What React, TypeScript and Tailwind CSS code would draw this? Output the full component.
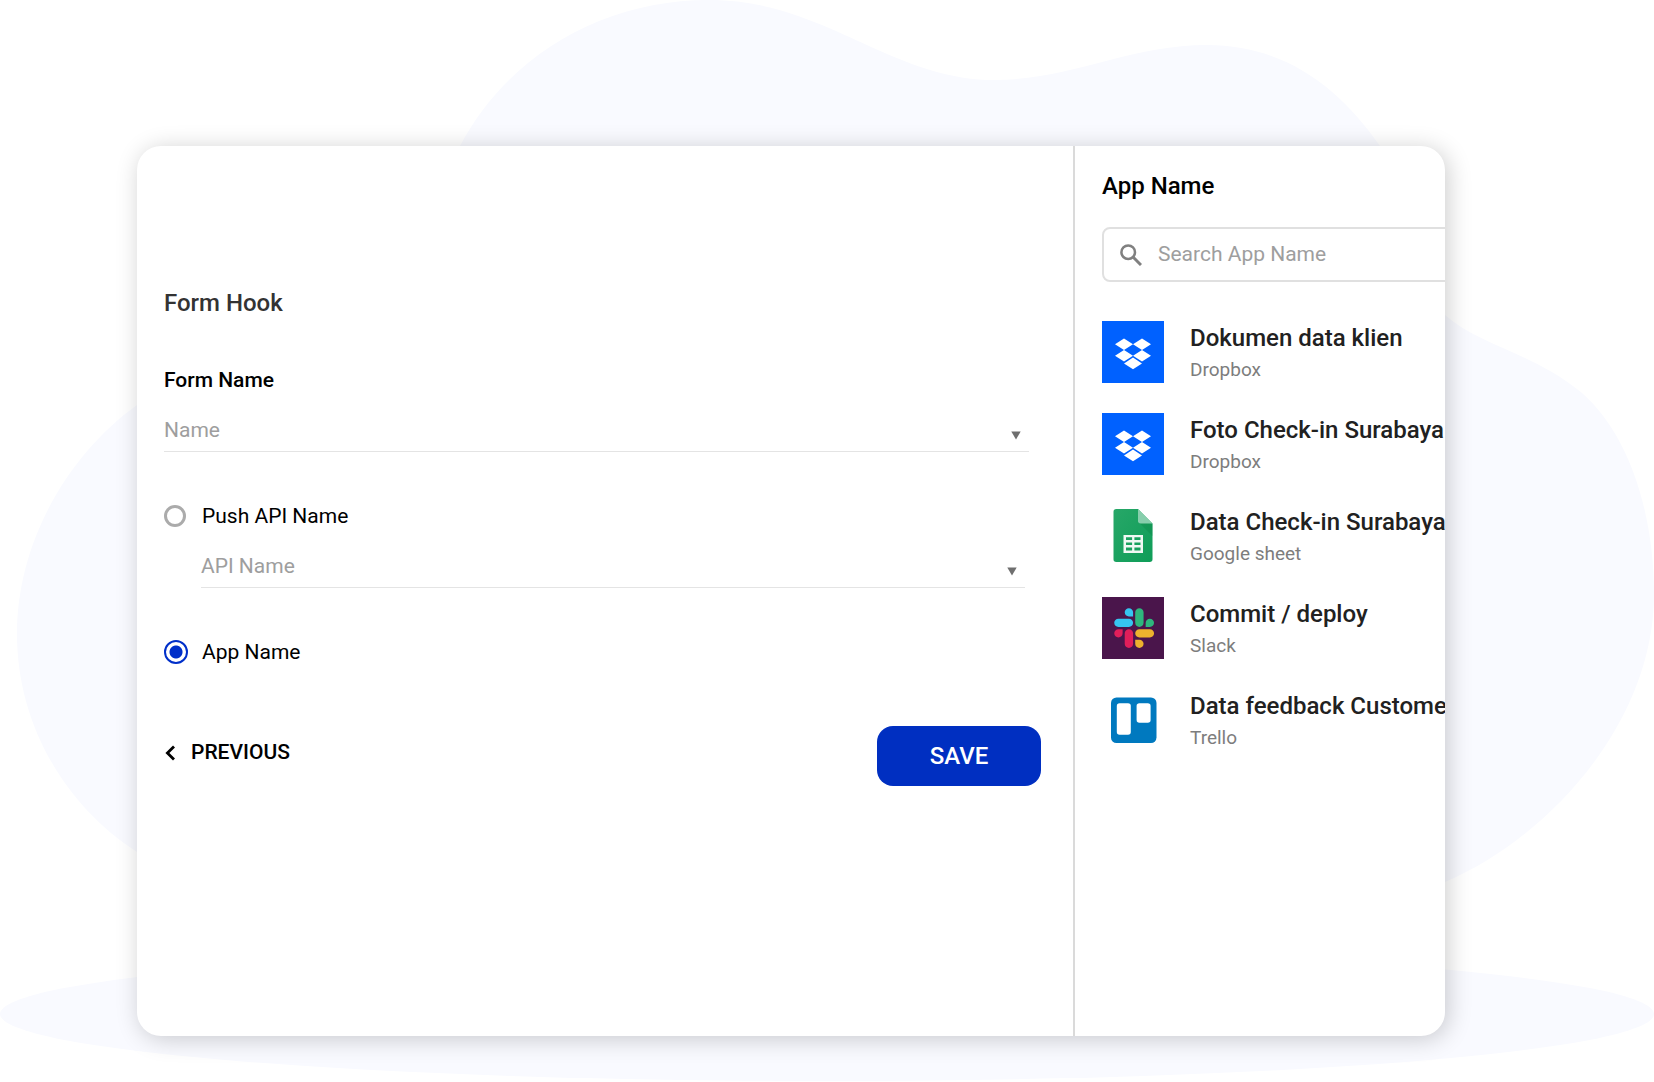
import type { ReactNode } from "react";
import { useState } from "react";

type AppKind = "Dropbox" | "Google sheet" | "Slack" | "Trello";

interface AppEntry {
  title: string;
  kind: AppKind;
}

const APPS: AppEntry[] = [
  { title: "Dokumen data klien", kind: "Dropbox" },
  { title: "Foto Check-in Surabaya", kind: "Dropbox" },
  { title: "Data Check-in Surabaya", kind: "Google sheet" },
  { title: "Commit / deploy", kind: "Slack" },
  { title: "Data feedback Customer", kind: "Trello" },
];

function DropboxLogo() {
  return (
    <svg viewBox="0 0 62 62" className="size-full bg-[#0061ff]" aria-hidden="true">
      <path
        fill="#fff"
        d="M22 17.6l9 5.7-9 5.7-9-5.7zM40 17.6l9 5.7-9 5.7-9-5.7zM22 29l9 5.7-9 5.7-9-5.7zM40 29l9 5.7-9 5.7-9-5.7zM31 36.6l9 5.8-9 5.8-9-5.8z"
      />
    </svg>
  );
}

function SheetLogo() {
  return (
    <svg viewBox="0 0 62 62" className="size-full" aria-hidden="true">
      <defs>
        <linearGradient id="sheet" x1="0" y1="0" x2="1" y2="1">
          <stop offset="0" stopColor="#27a768" />
          <stop offset="1" stopColor="#0f9d58" />
        </linearGradient>
      </defs>
      <path
        fill="url(#sheet)"
        d="M14.2 4H36l14.5 14.5v35.8a2.7 2.7 0 0 1-2.7 2.7H14.2a2.7 2.7 0 0 1-2.7-2.7V6.7A2.7 2.7 0 0 1 14.2 4z"
      />
      <path fill="#0b8043" fillOpacity="0.3" d="M37 17.5l13.5 13.4V18.5z" />
      <path fill="#87ceac" d="M36 4v11.8a2.7 2.7 0 0 0 2.7 2.7h11.8z" />
      <path
        fill="#f1f8f4"
        fillRule="evenodd"
        d="M21.5 30H41v18H21.5zM24 32.3v2.6h6.1v-2.6zM32.4 32.3v2.6h6.1v-2.6zM24 37.4V40h6.1v-2.6zM32.4 37.4V40h6.1v-2.6zM24 42.5v2.9h6.1v-2.9zM32.4 42.5v2.9h6.1v-2.9z"
      />
    </svg>
  );
}

function SlackLogo() {
  return (
    <svg viewBox="0 0 62 62" className="size-full bg-[#4a154b]" aria-hidden="true">
      <g transform="translate(12 11) scale(0.317)">
        <path
          fill="#e01e5a"
          d="M27.2 80c0 7.3-5.9 13.2-13.2 13.2C6.7 93.2.8 87.3.8 80c0-7.3 5.9-13.2 13.2-13.2h13.2V80zm6.6 0c0-7.3 5.9-13.2 13.2-13.2 7.3 0 13.2 5.9 13.2 13.2v33c0 7.3-5.9 13.2-13.2 13.2-7.3 0-13.2-5.9-13.2-13.2V80z"
        />
        <path
          fill="#36c5f0"
          d="M47 27c-7.3 0-13.2-5.9-13.2-13.2C33.8 6.5 39.7.6 47 .6c7.3 0 13.2 5.9 13.2 13.2V27H47zm0 6.7c7.3 0 13.2 5.9 13.2 13.2 0 7.3-5.9 13.2-13.2 13.2H13.9C6.6 60.1.7 54.2.7 46.9c0-7.3 5.9-13.2 13.2-13.2H47z"
        />
        <path
          fill="#2eb67d"
          d="M99.9 46.9c0-7.3 5.9-13.2 13.2-13.2 7.3 0 13.2 5.9 13.2 13.2 0 7.3-5.9 13.2-13.2 13.2H99.9V46.9zm-6.6 0c0 7.3-5.9 13.2-13.2 13.2-7.3 0-13.2-5.9-13.2-13.2V13.8C66.9 6.5 72.8.6 80.1.6c7.3 0 13.2 5.9 13.2 13.2v33.1z"
        />
        <path
          fill="#ecb22e"
          d="M80.1 99.8c7.3 0 13.2 5.9 13.2 13.2 0 7.3-5.9 13.2-13.2 13.2-7.3 0-13.2-5.9-13.2-13.2V99.8h13.2zm0-6.6c-7.3 0-13.2-5.9-13.2-13.2 0-7.3 5.9-13.2 13.2-13.2h33.1c7.3 0 13.2 5.9 13.2 13.2 0 7.3-5.9 13.2-13.2 13.2H80.1z"
        />
      </g>
    </svg>
  );
}

function TrelloLogo() {
  return (
    <svg viewBox="0 0 62 62" className="size-full" aria-hidden="true">
      <rect x="9" y="8.5" width="45.5" height="45.5" rx="5.5" fill="#0079bf" />
      <rect x="14.8" y="14.3" width="14" height="31.5" rx="2.8" fill="#fff" />
      <rect x="34.6" y="14.3" width="14" height="19.5" rx="2.8" fill="#fff" />
    </svg>
  );
}

function logoFor(kind: AppKind): ReactNode {
  switch (kind) {
    case "Dropbox":
      return <DropboxLogo />;
    case "Google sheet":
      return <SheetLogo />;
    case "Slack":
      return <SlackLogo />;
    case "Trello":
      return <TrelloLogo />;
  }
}

function Backdrop() {
  return (
    <svg
      viewBox="0 0 1654 1082"
      preserveAspectRatio="none"
      className="absolute inset-0 -z-10 size-full"
      aria-hidden="true"
    >
      <g fill="#f9faff">
        <path d="M460 146C510 52 606 0 709 0C825 0 890 80 995 80C1070 80 1130 45 1207 45C1285 45 1340 88 1380 146L1400 240C1425 290 1435 306 1445 315C1480 346 1532 352 1582 393C1630 435 1654 515 1654 594C1654 725 1545 840 1445 882L137 852C64 805 17 723 17 634C17 540 70 453 137 405L460 400Z" />
        <ellipse cx="827" cy="1014" rx="827" ry="67" />
      </g>
    </svg>
  );
}

interface PickerProps {
  id: string;
  label: string;
  placeholder: string;
}

function Picker({ id, label, placeholder }: PickerProps) {
  return (
    <div className="relative">
      <select
        id={id}
        aria-label={label}
        className="block h-[42px] w-full appearance-none border-b border-[#e4e4e4] bg-transparent text-[21px] text-[#9e9e9e] outline-none"
      >
        <option>{placeholder}</option>
      </select>
      <svg
        viewBox="0 0 10 9"
        className="pointer-events-none absolute right-2 bottom-3 h-[9px] w-[10px]"
        aria-hidden="true"
      >
        <path d="M0.3 0.5h9.4L5 8.5z" fill="#6f6f6f" />
      </svg>
    </div>
  );
}

export default function App() {
  const [target, setTarget] = useState("app");

  return (
    <div className="relative isolate flex min-h-screen bg-white pt-[146px] pr-[209px] pb-[46px] pl-[137px] font-['Roboto',sans-serif] text-black">
      <Backdrop />
      <main className="flex flex-1 overflow-hidden rounded-3xl bg-white shadow-[3px_3px_24px_rgba(0,0,0,0.2)]">
        <form
          className="min-w-0 flex-1 pt-[141px] pr-8 pl-[27px]"
          onSubmit={(e) => e.preventDefault()}
        >
          <h1 className="text-2xl font-medium text-[#333]">Form Hook</h1>

          <label
            htmlFor="form-name"
            className="mt-[45px] mb-[14px] block text-[21px] leading-8 font-medium"
          >
            Form Name
          </label>
          <div className="pr-3">
            <Picker id="form-name" label="Form Name" placeholder="Name" />
          </div>

          <label className="mt-12 mb-[14px] flex items-center gap-4 text-[21px] leading-8">
            <input
              type="radio"
              name="target"
              checked={target === "api"}
              onChange={() => setTarget("api")}
              className="size-[22px] appearance-none rounded-full border-3 border-[#ababab] checked:border-2 checked:border-[#002fc9] checked:bg-[radial-gradient(circle,#002fc9_6px,transparent_7px)]"
            />
            Push API Name
          </label>
          <div className="pr-4 pl-[37px]">
            <Picker id="api-name" label="API Name" placeholder="API Name" />
          </div>

          <label className="mt-12 flex items-center gap-[14px] text-[21px] leading-8">
            <input
              type="radio"
              name="target"
              checked={target === "app"}
              onChange={() => setTarget("app")}
              className="size-6 appearance-none rounded-full border-3 border-[#ababab] checked:border-2 checked:border-[#002fc9] checked:bg-[radial-gradient(circle,#002fc9_6px,transparent_7px)]"
            />
            App Name
          </label>

          <div className="mt-[58px] flex items-start justify-between">
            <button
              type="button"
              className="flex h-[54px] items-center gap-4 text-[21px] font-medium"
            >
              <svg viewBox="0 0 10 16" className="ml-px h-4 w-[10px]" aria-hidden="true">
                <path d="M9 1.4L2.4 8 9 14.6" fill="none" stroke="#000" strokeWidth="2.8" />
              </svg>
              PREVIOUS
            </button>
            <button
              type="submit"
              className="h-[60px] w-[164px] rounded-2xl bg-[#002fc1] text-2xl font-medium text-white"
            >
              SAVE
            </button>
          </div>
        </form>

        <aside className="w-[372px] shrink-0 overflow-hidden border-l-2 border-[#dadada] pt-6 pl-[27px]">
          <h2 className="text-2xl font-medium">App Name</h2>
          <label className="mt-[25px] flex h-[55px] w-[420px] items-center gap-4 rounded-lg border-2 border-[#e0e0e0] px-4">
            <svg viewBox="0 0 22 22" className="size-[22px] shrink-0" aria-hidden="true">
              <circle cx="8.2" cy="8.2" r="6.8" fill="none" stroke="#808080" strokeWidth="2.5" />
              <path d="M13 13l8 8" stroke="#808080" strokeWidth="3" />
            </svg>
            <input
              type="search"
              aria-label="Search App Name"
              placeholder="Search App Name"
              className="min-w-0 flex-1 text-[21px] outline-none placeholder:text-[#9e9e9e]"
            />
          </label>
          <ul className="mt-[39px] flex flex-col gap-[30px]">
            {APPS.map((app) => (
              <li key={app.title} className="flex h-[62px] gap-[26px] whitespace-nowrap">
                <div className="size-[62px] shrink-0">{logoFor(app.kind)}</div>
                <div className="pt-px">
                  <p className="text-2xl font-medium text-[#212121]">{app.title}</p>
                  <p className="text-[19px] leading-8 text-[#7d7d7d]">{app.kind}</p>
                </div>
              </li>
            ))}
          </ul>
        </aside>
      </main>
    </div>
  );
}
